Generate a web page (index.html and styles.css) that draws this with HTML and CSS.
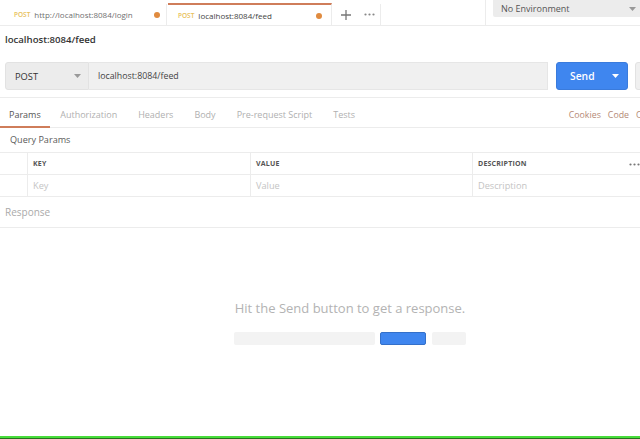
FILE: index.html
```html
<!DOCTYPE html>
<html>
<head>
<meta charset="utf-8">
<link rel="stylesheet" href="styles.css">
</head>
<body>
<div class="app">
  <div class="tabbar">
    <div class="tab">
      <span class="method">POST</span>
      <span class="tab-url">http://localhost:8084/login</span>
      <span class="dot"></span>
    </div>
    <div class="tab active">
      <span class="method">POST</span>
      <span class="tab-url">localhost:8084/feed</span>
      <span class="dot"></span>
    </div>
    <div class="tab-actions">
      <span class="tab-btn plus">
        <svg width="10" height="10" viewBox="0 0 10 10"><path d="M5 0v10M0 5h10" stroke="#777" stroke-width="1.3"/></svg>
      </span>
      <span class="tab-btn more">
        <svg width="11" height="3" viewBox="0 0 11 3"><circle cx="1.5" cy="1.5" r="1.1" fill="#888"/><circle cx="5.5" cy="1.5" r="1.1" fill="#888"/><circle cx="9.5" cy="1.5" r="1.1" fill="#888"/></svg>
      </span>
    </div>
    <div class="spacer"></div>
    <div class="env-wrap">
      <div class="env">
        <span>No Environment</span>
        <svg class="caret" width="7" height="4" viewBox="0 0 7 4"><path d="M0 0h7L3.5 4z" fill="#999"/></svg>
      </div>
    </div>
  </div>

  <div class="title">localhost:8084/feed</div>

  <div class="request-row">
    <div class="method-select">
      <span>POST</span>
      <svg class="caret" width="7" height="4" viewBox="0 0 7 4"><path d="M0 0h7L3.5 4z" fill="#999"/></svg>
    </div>
    <div class="url-input">localhost:8084/feed</div>
    <div class="send">
      <span>Send</span>
      <svg class="caret" width="7" height="4" viewBox="0 0 7 4"><path d="M0 0h7L3.5 4z" fill="#fff"/></svg>
    </div>
    <div class="save"></div>
  </div>

  <div class="subtabs">
    <span class="subtab active">Params</span>
    <span class="subtab">Authorization</span>
    <span class="subtab">Headers</span>
    <span class="subtab">Body</span>
    <span class="subtab">Pre-request Script</span>
    <span class="subtab">Tests</span>
    <span class="spacer"></span>
    <span class="link">Cookies</span>
    <span class="link">Code</span>
    <span class="link cut">Comments</span>
  </div>

  <div class="section-label">Query Params</div>

  <div class="params">
    <div class="cell first"></div>
    <div class="cell head">KEY</div>
    <div class="cell head">VALUE</div>
    <div class="cell head last">DESCRIPTION
      <svg class="more-h" width="11" height="3" viewBox="0 0 11 3"><circle cx="1.5" cy="1.5" r="1.1" fill="#777"/><circle cx="5.5" cy="1.5" r="1.1" fill="#777"/><circle cx="9.5" cy="1.5" r="1.1" fill="#777"/></svg>
    </div>
    <div class="cell first"></div>
    <div class="cell ph">Key</div>
    <div class="cell ph">Value</div>
    <div class="cell ph last">Description</div>
  </div>

  <div class="response-head">Response</div>

  <div class="empty">
    <div class="empty-text">Hit the Send button to get a response.</div>
    <div class="empty-bars">
      <span class="bar grey-long"></span>
      <span class="bar blue"></span>
      <span class="bar grey-short"></span>
    </div>
  </div>

  <div class="footer"></div>
</div>
</body>
</html>
```
FILE: styles.css
```css
html, body {
  margin: 0;
  padding: 0;
  background: #fff;
}
body {
  font-family: "Open Sans", "Liberation Sans", sans-serif;
  color: #333;
  width: 640px;
  height: 439px;
  overflow: hidden;
}
.app {
  display: flex;
  flex-direction: column;
  height: 439px;
}
.spacer { flex: 1; }

/* Tab bar */
.tabbar {
  display: flex;
  height: 26px;
  box-sizing: border-box;
  border-bottom: 1px solid #ececec;
  flex-shrink: 0;
}
.tab {
  display: flex;
  align-items: center;
  box-sizing: border-box;
  margin-top: 4px;
  height: 21px;
  font-size: 8px;
  color: #707070;
  border-right: 1px solid #ececec;
  padding: 0 6px 0 14px;
  flex-shrink: 0;
}
.tab:first-child { width: 167px; }
.tab.active {
  width: 164px;
  margin-left: 1px;
  padding: 0 9px 0 10px;
  border-top: 2px solid #cf7d5a;
  margin-top: 3px;
  height: 23px;
  color: #444;
}
.method {
  font-size: 6.5px;
  font-weight: 600;
  color: #e8c15a;
  margin-right: 4px;
}
.tab-url { flex: 1; white-space: nowrap; }
.dot {
  width: 6px;
  height: 6px;
  border-radius: 50%;
  background: #e08b3f;
}
.tab-actions {
  display: flex;
  margin-top: 4px;
  height: 21px;
  border-right: 1px solid #ececec;
}
.tab-btn {
  display: flex;
  align-items: center;
  justify-content: center;
  width: 22px;
}
.tab-btn.plus { width: 24px; padding-left: 2px; }
.env-wrap {
  display: flex;
  border-left: 1px solid #ececec;
  padding-left: 7px;
}
.env {
  display: flex;
  align-items: center;
  justify-content: space-between;
  width: 147px;
  height: 17px;
  box-sizing: border-box;
  background: #ececec;
  padding: 0 4px 0 8px;
  font-size: 9px;
  color: #555;
  border-bottom-left-radius: 2px;
}

/* Title */
.title {
  margin: 6px 0 0 5px;
  font-size: 9.6px;
  line-height: 16px;
  font-weight: 600;
  color: #333;
}

/* Request row */
.request-row {
  display: flex;
  margin: 14px 0 0 5px;
  height: 28px;
  overflow: hidden;
  flex-shrink: 0;
}
.method-select {
  display: flex;
  align-items: center;
  justify-content: space-between;
  box-sizing: border-box;
  width: 84px;
  flex-shrink: 0;
  padding: 0 7px 0 9px;
  background: #ececec;
  border: 1px solid #e2e2e2;
  border-radius: 3px 0 0 3px;
  font-size: 9.3px;
  color: #333;
}
.url-input {
  display: flex;
  align-items: center;
  box-sizing: border-box;
  width: 459px;
  flex-shrink: 0;
  padding-left: 9px;
  background: #f0f0f0;
  border: 1px solid #e6e6e6;
  border-left: none;
  font-size: 8.8px;
  color: #444;
}
.send {
  display: flex;
  align-items: center;
  justify-content: space-between;
  box-sizing: border-box;
  width: 72px;
  flex-shrink: 0;
  margin-left: 8px;
  padding: 0 8px 0 13px;
  background: #3f86ef;
  border: 1px solid #3a7bdc;
  border-radius: 3px;
  color: #fff;
  font-size: 10.3px;
  font-weight: 600;
}
.save {
  width: 40px;
  flex-shrink: 0;
  margin-left: 7px;
  box-sizing: border-box;
  background: #f0f0f0;
  border: 1px solid #e2e2e2;
  border-radius: 3px;
}

/* Sub tabs */
.subtabs {
  display: flex;
  align-items: stretch;
  margin-top: 7px;
  border-top: 1px solid #ececec;
  border-bottom: 1px solid #ececec;
  height: 31px;
  box-sizing: border-box;
  font-size: 9px;
  flex-shrink: 0;
}
.subtab {
  display: flex;
  align-items: center;
  padding: 4px 10.5px 0;
  color: #b0b0b0;
  border-bottom: 2px solid transparent;
  margin-bottom: -1px;
}
.subtab.active {
  color: #555;
  padding: 4px 9px 0;
  border-bottom-color: #cf7d5a;
}
.link {
  display: flex;
  align-items: center;
  padding-top: 4px;
  font-size: 8.8px;
  color: #b58a76;
  margin-right: 7px;
}
.link.cut { width: 4px; overflow: hidden; margin-right: 0; }

/* Query params */
.section-label {
  margin: 5px 0 0 10px;
  font-size: 9.1px;
  line-height: 14px;
  color: #5a5a5a;
}
.params {
  display: grid;
  grid-template-columns: 28px 223px 222px 1fr;
  grid-auto-rows: 22px;
  margin-top: 5px;
  border-top: 1px solid #ececec;
  flex-shrink: 0;
}
.cell {
  display: flex;
  align-items: center;
  box-sizing: border-box;
  padding-left: 5px;
  border-bottom: 1px solid #ececec;
  border-right: 1px solid #ececec;
}
.cell.last { border-right: none; position: relative; }
.cell.head {
  font-size: 7px;
  font-weight: 700;
  color: #555;
  letter-spacing: 0.2px;
}
.cell.ph {
  font-size: 9.2px;
  color: #c4c4c4;
}
.more-h {
  position: absolute;
  right: 0;
  top: 10px;
}

/* Response */
.response-head {
  display: flex;
  align-items: center;
  height: 31px;
  box-sizing: border-box;
  padding-left: 5px;
  border-bottom: 1px solid #ececec;
  font-size: 10px;
  color: #aaa;
  flex-shrink: 0;
}
.empty {
  flex: 1;
  display: flex;
  flex-direction: column;
  align-items: center;
  padding: 71px 0 0 60px;
}
.empty-text {
  font-size: 13px;
  line-height: 18px;
  color: #b3b3b3;
}
.empty-bars {
  display: flex;
  margin-top: 15px;
  height: 13px;
}
.bar {
  height: 13px;
  border-radius: 2px;
  background: #f3f3f3;
}
.bar.grey-long { width: 141px; }
.bar.blue {
  width: 46px;
  margin-left: 5px;
  background: #3f86ef;
  box-sizing: border-box;
  border: 1px solid #3470c9;
}
.bar.grey-short { width: 34px; margin-left: 6px; }

.footer {
  height: 3px;
  box-sizing: border-box;
  border-top: 2px solid #48dd3a;
  border-bottom: 1px solid #27701f;
  flex-shrink: 0;
}
```
